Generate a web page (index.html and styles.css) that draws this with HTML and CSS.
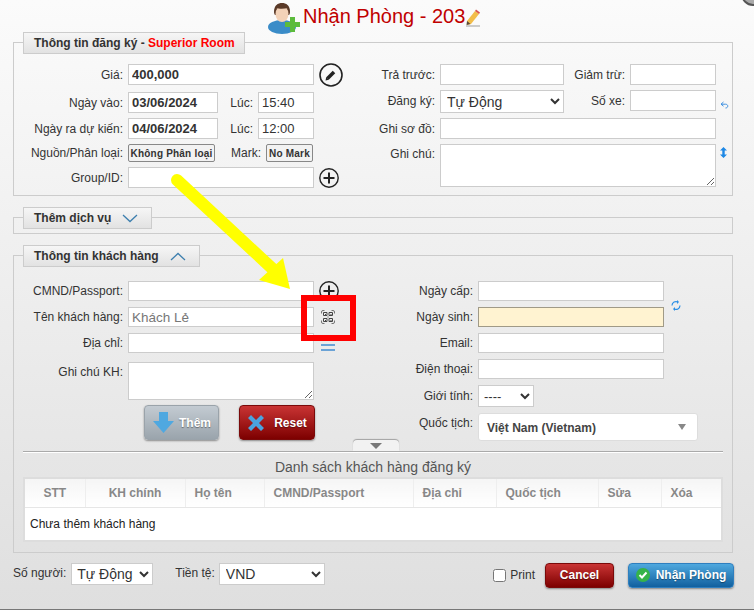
FILE: index.html
```html
<!DOCTYPE html>
<html lang="en">
<head>
<meta charset="UTF-8">
<meta name="viewport" content="width=device-width, initial-scale=1.0">
<link rel="stylesheet" href="styles.css">
<title>Nhận Phòng</title>
</head>
<body>
<div class="dialog">
    <div class="close-corner"></div>
    <h1 class="title">
        <svg class="title-user" width="34" height="34" viewBox="0 0 34 34">
            <ellipse cx="15" cy="27" rx="14" ry="7" fill="#3a8cc8"/>
            <path d="M7 12C7 5 11 3 15 3s8 2 8 9c0 2-1 3-1 3H8s-1-1-1-3z" fill="#5a3a28"/>
            <ellipse cx="15" cy="14" rx="6.5" ry="8" fill="#f3d2b8"/>
            <path d="M9 8c3 1 8 1 12 0l-1-3-5-1-5 1z" fill="#5a3a28"/>
            <path d="M23 17h5v5h5v5h-5v5h-5v-5h-5v-5h5z" fill="#5cbb3c"/>
        </svg>
        <span>Nhận Phòng - 203</span>
        <svg class="title-pen" width="14" height="18" viewBox="0 0 14 18">
            <path d="M1 12L9 2l4 3-8 10-4 1z" fill="#f2bd4a"/>
            <path d="M9 2l1-1.500 4 3-1 1.500z" fill="#d9534f"/>
            <path d="M1 12l-.5 4 4-1z" fill="#5a4a3a"/>
            <rect x="0" y="16" width="14" height="2" fill="#ccc"/>
        </svg>
    </h1>

    <section class="panel panel-register">
        <div class="legend">Thông tin đăng ký - <span class="room-type">Superior Room</span></div>
        <div class="panel-body cols">
            <div class="col col-left">
                <div class="row row-price">
                    <label>Giá:</label>
                    <input class="field w186 strong" value="400,000">
                    <svg class="icon-edit" width="24" height="24" viewBox="0 0 24 24">
                        <circle cx="12" cy="12" r="11" fill="none" stroke="#222" stroke-width="1.600"/>
                        <path d="M8.500 15.500L15 9" stroke="#222" stroke-width="3.600"/>
                        <path d="M6.500 17.500l.8-3.400 2.600 2.600z" fill="#222"/>
                    </svg>
                </div>
                <div class="row">
                    <label>Ngày vào:</label>
                    <input class="field w90 strong" value="03/06/2024">
                    <label class="label-time">Lúc:</label>
                    <input class="field w56" value="15:40">
                </div>
                <div class="row">
                    <label>Ngày ra dự kiến:</label>
                    <input class="field w90 strong" value="04/06/2024">
                    <label class="label-time">Lúc:</label>
                    <input class="field w56" value="12:00">
                </div>
                <div class="row row-source">
                    <label>Nguồn/Phân loại:</label>
                    <button class="chip chip-source">Không Phân loại</button>
                    <label class="label-mark">Mark:</label>
                    <button class="chip">No Mark</button>
                </div>
                <div class="row">
                    <label>Group/ID:</label>
                    <input class="field w186">
                    <svg class="icon-plus" width="20" height="20" viewBox="0 0 20 20">
                        <circle cx="10" cy="10" r="9.200" fill="none" stroke="#222" stroke-width="1.400"/>
                        <path d="M4.500 10h11M10 4.500v11" stroke="#222" stroke-width="2"/>
                    </svg>
                </div>
            </div>
            <div class="col col-right">
                <div class="row row-prepaid">
                    <label>Trả trước:</label>
                    <input class="field w124">
                    <label class="label-side">Giảm trừ:</label>
                    <input class="field w86">
                </div>
                <div class="row row-status">
                    <label>Đăng ký:</label>
                    <select class="picker w124 status"><option>Tự Động</option></select>
                    <label class="label-side">Số xe:</label>
                    <input class="field w86">
                    <svg class="icon-back" width="9" height="8" viewBox="0 0 9 8">
                        <path d="M3.500 1L1 3.200l2.500 2M1 3.200h4.500c3 0 3 3.800 0 3.800" fill="none" stroke="#3b8fe0"/>
                    </svg>
                </div>
                <div class="row">
                    <label>Ghi sơ đồ:</label>
                    <input class="field w276">
                </div>
                <div class="row row-note">
                    <label>Ghi chú:</label>
                    <textarea class="field w276 note"></textarea>
                    <svg class="icon-updown" width="7" height="11" viewBox="0 0 7 11">
                        <path d="M3.500 0L7 3.500H4.700v4H7L3.500 11 0 7.500h2.300v-4H0z" fill="#1e88e5"/>
                    </svg>
                </div>
            </div>
        </div>
    </section>

    <section class="panel panel-service">
        <div class="legend">Thêm dịch vụ<svg class="chevron" width="16" height="9" viewBox="0 0 16 9"><path d="M1 1l7 6.500L15 1" fill="none" stroke="#3d7fae" stroke-width="1.300"/></svg></div>
    </section>

    <section class="panel panel-guest">
        <div class="legend">Thông tin khách hàng<svg class="chevron" width="16" height="9" viewBox="0 0 16 9"><path d="M1 8l7-6.500L15 8" fill="none" stroke="#3d7fae" stroke-width="1.300"/></svg></div>
        <div class="panel-body cols guest-cols">
            <div class="col col-left">
                <div class="row">
                    <label>CMND/Passport:</label>
                    <input class="field w186">
                    <svg class="icon-plus" width="20" height="20" viewBox="0 0 20 20">
                        <circle cx="10" cy="10" r="9.200" fill="none" stroke="#222" stroke-width="1.400"/>
                        <path d="M4.500 10h11M10 4.500v11" stroke="#222" stroke-width="2"/>
                    </svg>
                </div>
                <div class="row">
                    <label>Tên khách hàng:</label>
                    <input class="field w186 guest-name" placeholder="Khách Lẻ">
                    <svg class="icon-qr" width="14" height="14" viewBox="0 0 14 14">
                        <path d="M.5 3.500V2Q.5.500 2 .5h1.500M10.500.5H12Q13.500.500 13.500 2v1.500M13.500 10.500V12q0 1.500-1.500 1.500h-1.500M3.500 13.500H2Q.5 13.500.5 12v-1.500" fill="none" stroke="#555" stroke-width=".8"/>
                        <path d="M2.500 2.500h3.500v3H2.500zM8 2.500h3.500v3H8zM2.500 8.500h3.500v3H2.500zM8 8.500h3.500v3H8z" fill="none" stroke="#444"/>
                        <path d="M6.500 6.500h1v1h-1zM4 4h1v1H4zM9.500 4h1v1h-1zM4 10h1v1H4zM9.500 10h1v1h-1z" fill="#444"/>
                    </svg>
                </div>
                <div class="row">
                    <label>Địa chỉ:</label>
                    <input class="field w186">
                    <div class="icon-lines"></div>
                </div>
                <div class="row row-guest-note">
                    <label>Ghi chú KH:</label>
                    <textarea class="field w186 guest-note"></textarea>
                </div>
                <div class="guest-actions">
                    <button class="btn btn-grey">
                        <svg width="23" height="23" viewBox="0 0 23 23"><path d="M7 1h9v9h6L11.500 22 1 10h6z" fill="#4fa8e0"/></svg>
                        Thêm
                    </button>
                    <button class="btn btn-red btn-reset">
                        <svg width="18" height="18" viewBox="0 0 18 18"><path d="M4 1l5 5 5-5 3 3-5 5 5 5-3 3-5-5-5 5-3-3 5-5-5-5z" fill="#4aa3df"/></svg>
                        Reset
                    </button>
                </div>
            </div>
            <div class="col col-guest-right">
                <div class="row">
                    <label>Ngày cấp:</label>
                    <input class="field w186">
                </div>
                <div class="row">
                    <label>Ngày sinh:</label>
                    <input class="field w186 birth">
                    <svg class="icon-sync" width="10" height="11" viewBox="0 0 10 11">
                        <path d="M1 5.500a4 4 0 0 1 6-3.400M9 5.500a4 4 0 0 1-6 3.400" fill="none" stroke="#2b8fe6" stroke-width="1.200"/>
                        <path d="M6 0v4l2-2zM4 11V7L2 9z" fill="#2b8fe6"/>
                    </svg>
                </div>
                <div class="row">
                    <label>Email:</label>
                    <input class="field w186">
                </div>
                <div class="row">
                    <label>Điện thoại:</label>
                    <input class="field w186">
                </div>
                <div class="row row-gender">
                    <label>Giới tính:</label>
                    <select class="picker gender"><option>----</option></select>
                </div>
                <div class="row row-country">
                    <label>Quốc tịch:</label>
                    <div class="country">Việt Nam (Vietnam)<i class="country-caret"></i></div>
                </div>
            </div>
        </div>
        <div class="divider"><div class="divider-tab"><i></i></div></div>
        <div class="list-title">Danh sách khách hàng đăng ký</div>
        <table class="guest-table">
            <thead>
                <tr>
                    <th class="c-stt">STT</th>
                    <th class="c-main">KH chính</th>
                    <th class="c-name">Họ tên</th>
                    <th class="c-id">CMND/Passport</th>
                    <th class="c-addr">Địa chỉ</th>
                    <th class="c-nat">Quốc tịch</th>
                    <th class="c-edit">Sửa</th>
                    <th class="c-del">Xóa</th>
                </tr>
            </thead>
            <tbody>
                <tr><td colspan="8">Chưa thêm khách hàng</td></tr>
            </tbody>
        </table>
    </section>

    <div class="footer">
        <label>Số người:</label>
        <select class="picker people"><option>Tự Động</option></select>
        <label class="label-currency">Tiền tệ:</label>
        <select class="picker currency"><option>VND</option></select>
        <div class="footer-actions">
            <input type="checkbox" class="print-check" id="printCheck">
            <label for="printCheck" class="print-label">Print</label>
            <button class="btn btn-red btn-cancel">Cancel</button>
            <button class="btn btn-blue btn-confirm">
                <svg width="14" height="14" viewBox="0 0 14 14"><circle cx="7" cy="7" r="7" fill="#35b34a"/><path d="M3.500 7l2.500 2.500 4.500-5" fill="none" stroke="#fff" stroke-width="2"/></svg>
                Nhận Phòng
            </button>
        </div>
    </div>

    <!-- annotation drawn over the form -->
    <svg class="annotation" width="754" height="610" viewBox="0 0 754 610">
        <path d="M177 180L276 272" stroke="#ffff00" stroke-width="12" stroke-linecap="round"/>
        <path d="M290 289L259 280 283 258z" fill="#ffff00"/>
        <rect x="304" y="298" width="49" height="40" fill="none" stroke="#ff0000" stroke-width="6"/>
    </svg>
</div>
</body>
</html>
```

FILE: styles.css
```css
* {
    box-sizing: border-box;
}

html,
body {
    margin: 0;
    padding: 0;
}

body {
    font-family: "Liberation Sans", Arial, sans-serif;
    font-size: 12px;
    color: #333;
}

.dialog {
    position: relative;
    width: 754px;
    height: 610px;
    overflow: hidden;
    padding: 0 20px 0 13px;
    background: linear-gradient(to bottom, #fbfbfb, #dfdfdf);
    border-bottom: 1px solid #777;
}

.close-corner {
    position: absolute;
    top: -18px;
    right: -11px;
    width: 24px;
    height: 24px;
    border-radius: 50%;
    background: #aaa;
    border: 2px solid #555;
}

.title {
    display: flex;
    align-items: center;
    height: 32px;
    margin: 0;
    padding: 1px 0 0 254px;
    font-size: 20px;
    font-weight: normal;
    color: #c00000;
    white-space: nowrap;
}

.title-user {
    margin: 1px 2px 0 0;
}

.title-pen {
    margin: 3px 0 0 1px;
}

/* panels */
.panel {
    position: relative;
    width: 720px;
    border: 1px solid #ccc;
}

.panel-register {
    height: 154px;
    margin-top: 10px;
}

.panel-service {
    height: 17px;
    margin-top: 21px;
}

.panel-guest {
    height: 298px;
    margin-top: 21px;
    padding: 0 9px;
}

.legend {
    position: absolute;
    top: -11px;
    left: 9px;
    height: 22px;
    padding: 0 10px;
    font-weight: bold;
    line-height: 20px;
    color: #333;
    white-space: nowrap;
    background: linear-gradient(to bottom, #f6f6f6, #e2e2e2);
    border: 1px solid #ccc;
}

.panel-register .legend {
    width: 222px;
}

.room-type {
    color: #f00;
}

.chevron {
    margin-left: 11px;
    vertical-align: -1px;
}

.panel-service .legend {
    width: 129px;
}

.panel-guest .legend {
    width: 177px;
}

.cols {
    display: flex;
}

.panel-body {
    padding-top: 21px;
}

.guest-cols {
    margin: 0 -9px;
    padding-top: 25px;
    height: 185px;
}

.col {
    display: flex;
    flex-direction: column;
    flex: none;
}

.col-left {
    width: 361px;
}

.col-right {
    width: 345px;
}

.col-guest-right {
    width: 340px;
}

.row {
    display: flex;
    flex: none;
    align-items: center;
    height: 20px;
    margin-bottom: 6px;
}

.row label {
    flex: none;
    text-align: right;
    color: #333;
    white-space: nowrap;
}

.col-left > .row > label:first-child {
    width: 109px;
    margin-right: 5px;
}

.col-right > .row > label:first-child {
    width: 60px;
    margin-right: 5px;
}

.col-guest-right > .row > label:first-child {
    width: 98px;
    margin-right: 5px;
}

.panel-register .row {
    height: 21px;
    margin-bottom: 5px;
}

.panel-register .row-price,
.panel-register .row-status {
    margin-bottom: 7px;
}

.panel-register .row-source {
    height: 18px;
}

.label-time {
    width: 35px;
    margin-right: 5px;
}

.label-mark {
    width: 30px;
    margin: 0 5px 0 16px;
}

.label-side {
    width: 61px;
    margin-right: 5px;
}

/* inputs */
.field {
    flex: none;
    height: 100%;
    padding: 0 3px;
    font-family: "Liberation Sans", Arial, sans-serif;
    font-size: 13px;
    color: #333;
    background: #fff;
    border: 1px solid #ccc;
    border-radius: 0;
    outline: none;
}

.strong {
    font-weight: bold;
}

.w56 { width: 56px; }
.w86 { width: 86px; }
.w90 { width: 90px; }
.w124 { width: 124px; }
.w186 { width: 186px; }
.w276 { width: 276px; }

.panel-register .row-note {
    align-items: flex-start;
    height: 43px;
    margin: 0;
}

.row-note label,
.row-guest-note label {
    margin-top: 3px;
}

.note {
    height: 43px;
}

.row-guest-note {
    align-items: flex-start;
    height: 38px;
    margin: 3px 0 5px;
}

.guest-note {
    height: 38px;
}

.guest-name {
    font-size: 13.500px;
}

.guest-name::placeholder {
    color: #777;
    opacity: 1;
}

.birth {
    background: #fff3d1;
    border-color: #a09a87;
}

.picker {
    flex: none;
    height: 100%;
    font-family: "Liberation Sans", Arial, sans-serif;
    font-size: 14px;
    color: #333;
    background: #fff;
    border: 1px solid #ccc;
    border-radius: 0;
    padding-left: 1px;
}

.status {
    align-self: flex-start;
    height: 23px;
    padding-left: 2px;
}

.row-gender {
    height: 22px;
}

.gender {
    width: 56px;
    font-size: 13px;
}

.row-country {
    align-items: flex-start;
    height: 28px;
    margin: 0;
}

.row-country label {
    margin-top: 3px;
}

.country {
    position: relative;
    display: flex;
    align-items: center;
    width: 220px;
    height: 28px;
    padding: 1px 0 0 8px;
    font-weight: bold;
    color: #444;
    background: #fff;
    border: 1px solid #ddd;
    border-radius: 3px;
}

.country-caret {
    position: absolute;
    top: 10px;
    right: 11px;
    border-left: 4px solid transparent;
    border-right: 4px solid transparent;
    border-top: 6px solid #888;
}

.chip {
    flex: none;
    width: 47px;
    height: 18px;
    padding: 0;
    font-family: "Liberation Sans", Arial, sans-serif;
    font-size: 10px;
    font-weight: bold;
    letter-spacing: .2px;
    color: #333;
    background: #f2f2f2;
    border: 1px solid #888;
    border-radius: 2px;
}

.chip-source {
    width: 87px;
}

.icon-edit {
    margin-left: 5px;
    flex: none;
}

.icon-plus {
    margin-left: 5px;
    flex: none;
}

.icon-back {
    flex: none;
    margin: 8px 0 0 4px;
}

.icon-updown {
    flex: none;
    margin: 3px 0 0 4px;
}

.icon-qr {
    flex: none;
    margin-left: 7px;
}

.icon-lines {
    flex: none;
    width: 14px;
    height: 7px;
    margin: 9px 0 0 7px;
    border-top: 2px solid #6ba3d6;
    border-bottom: 2px solid #6ba3d6;
}

.icon-sync {
    flex: none;
    margin: -24px 0 0 7px;
}

/* buttons */
.btn {
    display: inline-flex;
    align-items: center;
    justify-content: center;
    padding: 0;
    font-family: "Liberation Sans", Arial, sans-serif;
    font-size: 12px;
    font-weight: bold;
    color: #fff;
    text-shadow: 0 1px 1px rgba(0, 0, 0, .4);
    border-radius: 4px;
    box-shadow: 0 1px 2px rgba(0, 0, 0, .4);
}

.btn-grey {
    background: linear-gradient(to bottom, #c3cbd2, #9aa4ac);
    border: 1px solid #9aa3aa;
}

.btn-red {
    background: linear-gradient(to bottom, #c93434, #7d0000);
    border: 1px solid #7a0a0a;
}

.btn-blue {
    background: linear-gradient(to bottom, #4fa8de, #11609f);
    border: 1px solid #2f7fbf;
}

.guest-actions {
    display: flex;
    gap: 20px;
    padding-left: 130px;
}

.guest-actions .btn {
    width: 75px;
    height: 35px;
    gap: 4px;
}

.guest-actions .btn-reset {
    width: 76px;
    gap: 9px;
}

/* guest list */
.divider {
    position: relative;
    height: 2px;
    margin-top: 10px;
    background: #aaa;
    border-bottom: 1px solid #fff;
}

.divider-tab {
    position: absolute;
    top: -11px;
    left: 330px;
    width: 46px;
    height: 11px;
    background: #f2f2f2;
    border-radius: 4px 4px 0 0;
    box-shadow: 0 -1px 1px rgba(0, 0, 0, .3);
}

.divider-tab i {
    position: absolute;
    top: 3px;
    left: 17px;
    border-left: 6px solid transparent;
    border-right: 6px solid transparent;
    border-top: 6px solid #777;
}

.list-title {
    height: 24px;
    padding-top: 6px;
    font-size: 14px;
    line-height: 16px;
    color: #555;
    text-align: center;
}

.guest-table {
    width: 700px;
    height: 65px;
    table-layout: fixed;
    border-collapse: collapse;
    background: #fff;
    border: 2px solid #ddd;
}

.guest-table th {
    height: 29px;
    padding: 0 0 0 9px;
    font-size: 12px;
    color: #888;
    text-align: left;
    background: linear-gradient(to bottom, #f5f5f5, #fff);
    border-right: 1px solid #eee;
    border-bottom: 1px solid #e6e6e6;
}

.guest-table td {
    padding: 0 5px;
    color: #222;
}

.guest-table .c-stt,
.guest-table .c-main {
    padding: 0;
    text-align: center;
}

.c-stt { width: 61px; }
.c-main { width: 100px; }
.c-name { width: 79px; }
.c-id { width: 149px; }
.c-addr { width: 83px; }
.c-nat { width: 102px; }
.c-edit { width: 63px; }

/* footer */
.footer {
    display: flex;
    align-items: center;
    width: 721px;
    height: 26px;
    margin-top: 9px;
}

.footer label {
    color: #333;
}

.footer > label {
    margin-top: -4px;
}

.footer .picker {
    height: 22px;
    margin-top: -3px;
}

.footer .people {
    width: 82px;
    margin-left: 5px;
}

.footer .label-currency {
    margin: -4px 4px 0 22px;
}

.currency {
    width: 106px;
    padding-left: 2px;
}

.footer-actions {
    display: flex;
    align-items: center;
    margin-left: auto;
}

.print-check {
    width: 13px;
    height: 13px;
    margin: 0 4px 0 0;
}

.print-label {
    margin-right: 10px;
}

.btn-cancel {
    width: 69px;
    height: 25px;
    margin-right: 14px;
}

.btn-confirm {
    width: 106px;
    height: 25px;
    gap: 6px;
}

/* red box and arrow */
.annotation {
    position: absolute;
    top: 0;
    left: 0;
    pointer-events: none;
}
```
